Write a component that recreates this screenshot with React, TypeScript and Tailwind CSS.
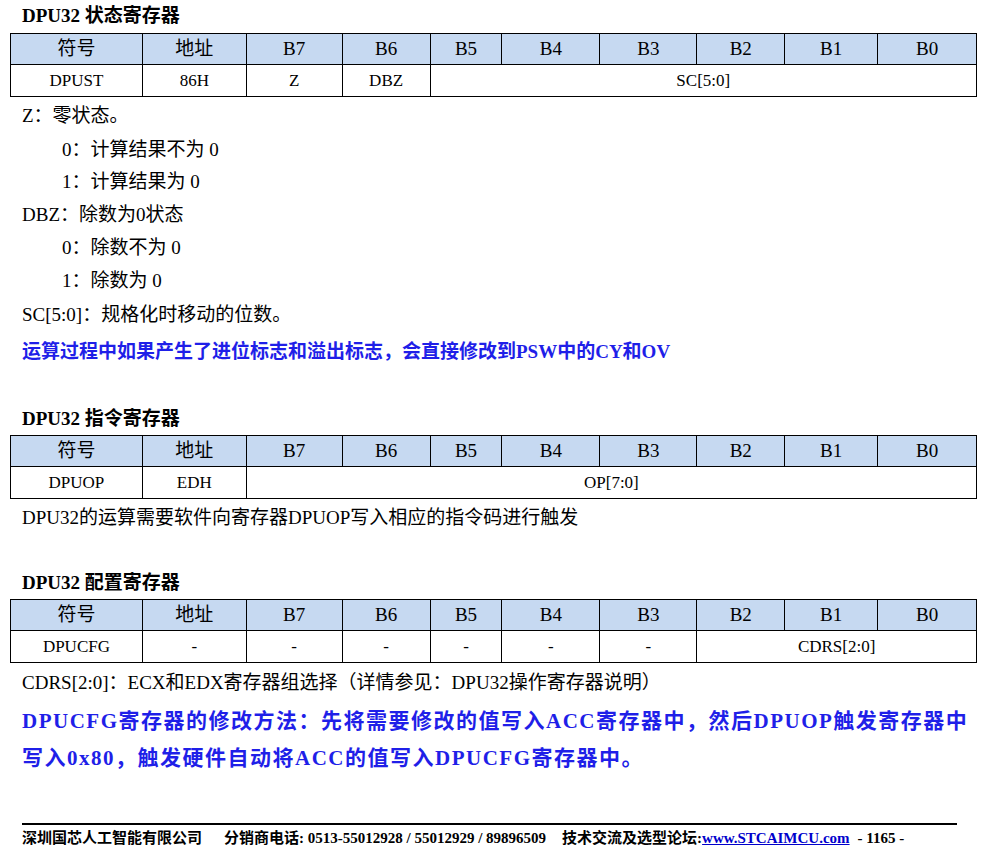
const F = { fontFamily: '"Liberation Serif","Noto Sans CJK SC",serif' };
const WS = [132,104,96,88,72,98,97,88,93,98];
const H = ["符号","地址","B7","B6","B5","B4","B3","B2","B1","B0"];

function Table({ row }: { row: [string, number][] }) {
  let idx = 0;
  return (
    <div className="ml-[10px] w-[967px] border border-black text-[19px]">
      <div className="flex h-[31px] bg-[#c6d9f1] border-b border-black">
        {H.map((h, i) => (
          <div key={i} style={{ width: WS[i] }} className={`flex items-center justify-center ${i < 9 ? "border-r border-black" : ""}`}>{h}</div>
        ))}
      </div>
      <div className="flex h-[31px] text-[17px]">
        {row.map(([t, span], k) => {
          const start = idx; idx += span;
          const w = WS.slice(start, idx).reduce((a, b) => a + b, 0);
          return (
            <div key={k} style={{ width: w }} className={`flex items-center justify-center ${idx < 10 ? "border-r border-black" : ""}`}>{t}</div>
          );
        })}
      </div>
    </div>
  );
}

const L = ({ h, c, children }: { h: string; c?: string; children: React.ReactNode }) => (
  <div className={`${h} flex items-center ${c ?? "pl-[22px]"} text-[19px]`}>{children}</div>
);

export default function App() {
  return (
    <div className="w-[981px] h-[850px] bg-white text-black relative overflow-hidden" style={F}>
      <div className="h-[33px] flex items-center pl-[22px] font-bold text-[19px]">DPU32 状态寄存器</div>
      <Table row={[["DPUST",1],["86H",1],["Z",1],["DBZ",1],["SC[5:0]",6]]} />
      <L h="h-[36px] mt-[1px]">Z：零状态。</L>
      <L h="h-[32px]" c="pl-[62px]">0：计算结果不为 0</L>
      <L h="h-[32px]" c="pl-[62px]">1：计算结果为 0</L>
      <L h="h-[34px]">DBZ：除数为0状态</L>
      <L h="h-[33px]" c="pl-[62px]">0：除数不为 0</L>
      <L h="h-[33px]" c="pl-[62px]">1：除数为 0</L>
      <L h="h-[35px]">SC[5:0]：规格化时移动的位数。</L>
      <div className="h-[38px] flex items-center pl-[22px] text-[19px] font-bold text-[#1f1fe8]">运算过程中如果产生了进位标志和溢出标志，会直接修改到PSW中的CY和OV</div>
      <div className="h-[64px] flex items-end pb-[2px] pl-[22px] font-bold text-[19px]">DPU32 指令寄存器</div>
      <Table row={[["DPUOP",1],["EDH",1],["OP[7:0]",8]]} />
      <L h="h-[38px]">DPU32的运算需要软件向寄存器DPUOP写入相应的指令码进行触发</L>
      <div className="h-[62px] flex items-end pb-[2px] pl-[22px] font-bold text-[19px]">DPU32 配置寄存器</div>
      <Table row={[["DPUCFG",1],["-",1],["-",1],["-",1],["-",1],["-",1],["-",1],["CDRS[2:0]",3]]} />
      <L h="h-[40px]">CDRS[2:0]：ECX和EDX寄存器组选择（详情参见：DPU32操作寄存器说明）</L>
      <div className="pl-[22px] text-[21px] font-bold text-[#1f1fe8] leading-[37px] tracking-[1.5px]">
        <div>DPUCFG寄存器的修改方法：先将需要修改的值写入ACC寄存器中，然后DPUOP触发寄存器中</div>
        <div>写入0x80，触发硬件自动将ACC的值写入DPUCFG寄存器中。</div>
      </div>
      <div className="mt-[46px] ml-[22px] w-[935px] border-t-2 border-black"></div>
      <div className="pl-[22px] pt-[2px] text-[15px] font-bold flex whitespace-nowrap">
        <span>深圳国芯人工智能有限公司</span>
        <span className="ml-[22px]">分销商电话: 0513-55012928 / 55012929 / 89896509</span>
        <span className="ml-[16px]">技术交流及选型论坛:<span className="text-[#0000cc] underline">www.STCAIMCU.com</span></span>
        <span className="ml-[8px]">- 1165 -</span>
      </div>
    </div>
  );
}
